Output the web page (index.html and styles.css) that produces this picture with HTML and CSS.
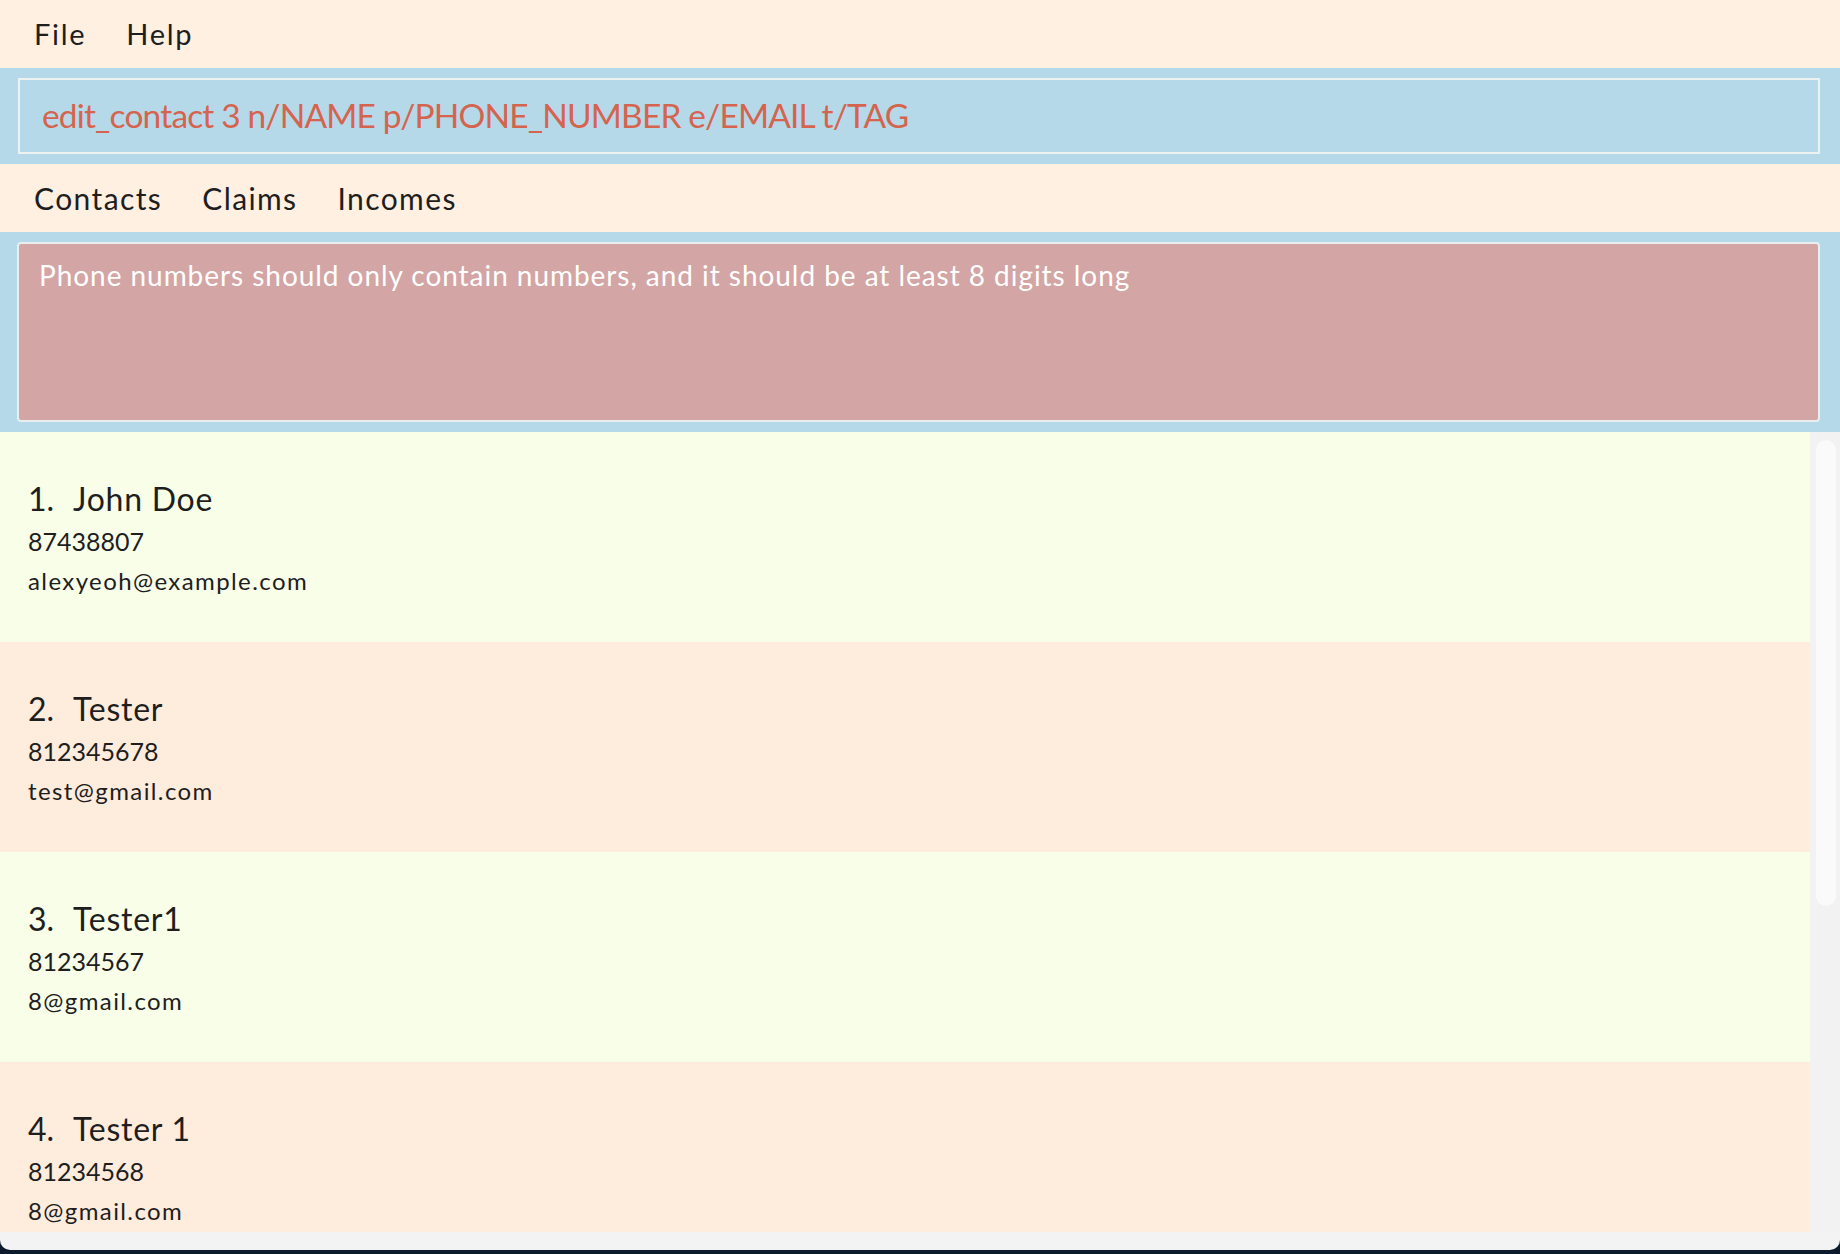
FILE: index.html
```html
<!DOCTYPE html>
<html lang="en">
<head>
<meta charset="utf-8">
<title>Contacts</title>
<link rel="stylesheet" href="styles.css">
</head>
<body>
<div class="window">
  <div class="menubar">
    <span class="menu-item">File</span>
    <span class="menu-item">Help</span>
  </div>
  <div class="command-bar">
    <div class="command-box">edit_contact 3 n/NAME p/PHONE_NUMBER e/EMAIL t/TAG</div>
  </div>
  <div class="tabbar">
    <span class="tab">Contacts</span>
    <span class="tab">Claims</span>
    <span class="tab">Incomes</span>
  </div>
  <div class="result-bar">
    <div class="result-box">Phone numbers should only contain numbers, and it should be at least 8 digits long</div>
  </div>
  <div class="list-area">
    <div class="list">
      <div class="card odd">
        <div class="name"><span class="idx">1.</span>John Doe</div>
        <div class="phone">87438807</div>
        <div class="email">alexyeoh@example.com</div>
      </div>
      <div class="card even">
        <div class="name"><span class="idx">2.</span>Tester</div>
        <div class="phone">812345678</div>
        <div class="email">test@gmail.com</div>
      </div>
      <div class="card odd">
        <div class="name"><span class="idx">3.</span>Tester1</div>
        <div class="phone">81234567</div>
        <div class="email">8@gmail.com</div>
      </div>
      <div class="card even last">
        <div class="name"><span class="idx">4.</span>Tester 1</div>
        <div class="phone">81234568</div>
        <div class="email">8@gmail.com</div>
      </div>
    </div>
    <div class="scroll-track"><div class="scroll-thumb"></div></div>
  </div>
</div>
</body>
</html>
```
FILE: styles.css
```css
html, body {
  margin: 0;
  padding: 0;
}
body {
  background: #0c1a2b;
  width: 1840px;
  height: 1254px;
  overflow: hidden;
  font-family: "Lato", "Open Sans", sans-serif;
  color: #1e1e1e;
}
.window {
  height: 1250px;
  background: #f3f3f3;
  border-radius: 0 0 10px 10px;
  overflow: hidden;
  display: flex;
  flex-direction: column;
}
.menubar {
  height: 68px;
  background: #fff0e2;
  display: flex;
  padding-left: 34px;
  gap: 40px;
  font-size: 29px;
  line-height: 68px;
  letter-spacing: 1.7px;
}
.command-bar {
  height: 96px;
  box-sizing: border-box;
  background: #b5d9e8;
  padding: 10px 20px 10px 18px;
}
.command-box {
  height: 76px;
  box-sizing: border-box;
  border: 2.5px solid #eef1f1;
  padding-left: 22px;
  font-size: 33.5px;
  line-height: 71px;
  letter-spacing: -0.85px;
  color: #d5644f;
  white-space: nowrap;
}
.tabbar {
  height: 68px;
  background: #fff0e2;
  display: flex;
  padding-left: 34px;
  gap: 40px;
  font-size: 30px;
  line-height: 68px;
  letter-spacing: 1.4px;
}
.result-bar {
  height: 200px;
  box-sizing: border-box;
  background: #b5d9e8;
  padding: 10px 20px 10px 17px;
}
.result-box {
  height: 180px;
  box-sizing: border-box;
  border: 2px solid #e9eeee;
  border-radius: 4px;
  background: #d3a5a5;
  color: #ffffff;
  font-size: 28px;
  line-height: 36px;
  letter-spacing: 0.95px;
  padding: 13px 0 0 20px;
}
.list-area {
  height: 800px;
  display: flex;
}
.list {
  width: 1810px;
  display: flex;
  flex-direction: column;
}
.card {
  height: 210px;
  flex: none;
  box-sizing: border-box;
  padding: 47px 0 0 28px;
}
.card.last {
  height: 170px;
}
.odd { background: #f8fee8; }
.even { background: #feecdc; }
.name {
  font-size: 32px;
  line-height: 40px;
  letter-spacing: 0.75px;
}
.idx {
  display: inline-block;
  width: 45px;
  letter-spacing: 0;
}
.phone {
  font-size: 25px;
  line-height: 45px;
}
.email {
  font-size: 24px;
  line-height: 33px;
  letter-spacing: 1.4px;
}
.scroll-track {
  width: 30px;
  background: #f2f2f2;
  padding: 8px 4px 0 6px;
  box-sizing: border-box;
}
.scroll-thumb {
  width: 20px;
  height: 466px;
  background: #fafafa;
  border-radius: 10px;
}
```
